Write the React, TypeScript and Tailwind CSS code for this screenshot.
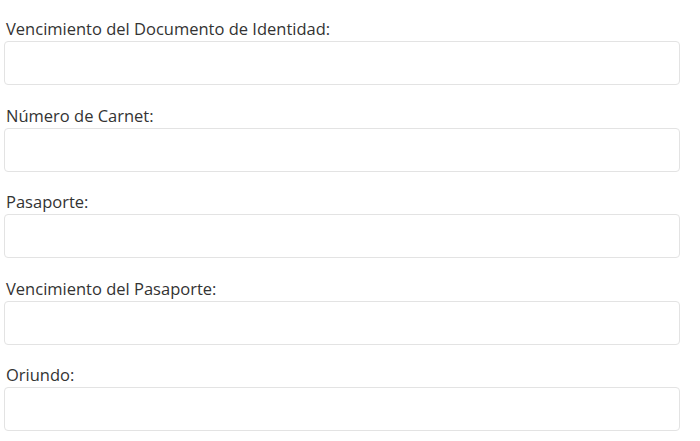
const fields = [
  "Vencimiento del Documento de Identidad:",
  "Número de Carnet:",
  "Pasaporte:",
  "Vencimiento del Pasaporte:",
  "Oriundo:",
];

export default function App() {
  return (
    <div
      className="w-[700px] h-[441px] bg-white overflow-hidden pl-1 pt-[19px]"
      style={{ fontFamily: '"Open Sans", sans-serif' }}
    >
      <div className="flex flex-col gap-[20.5px] w-[676px]">
        {fields.map((label) => (
          <div key={label} className="flex flex-col">
            <label className="text-[16.5px] leading-5 text-[#333] pl-[2px] mb-[2px]">
              {label}
            </label>
            <input
              type="text"
              className="h-[44px] w-full rounded border border-[#e3e3e3] bg-white px-3 text-[14px] outline-none"
            />
          </div>
        ))}
      </div>
    </div>
  );
}
